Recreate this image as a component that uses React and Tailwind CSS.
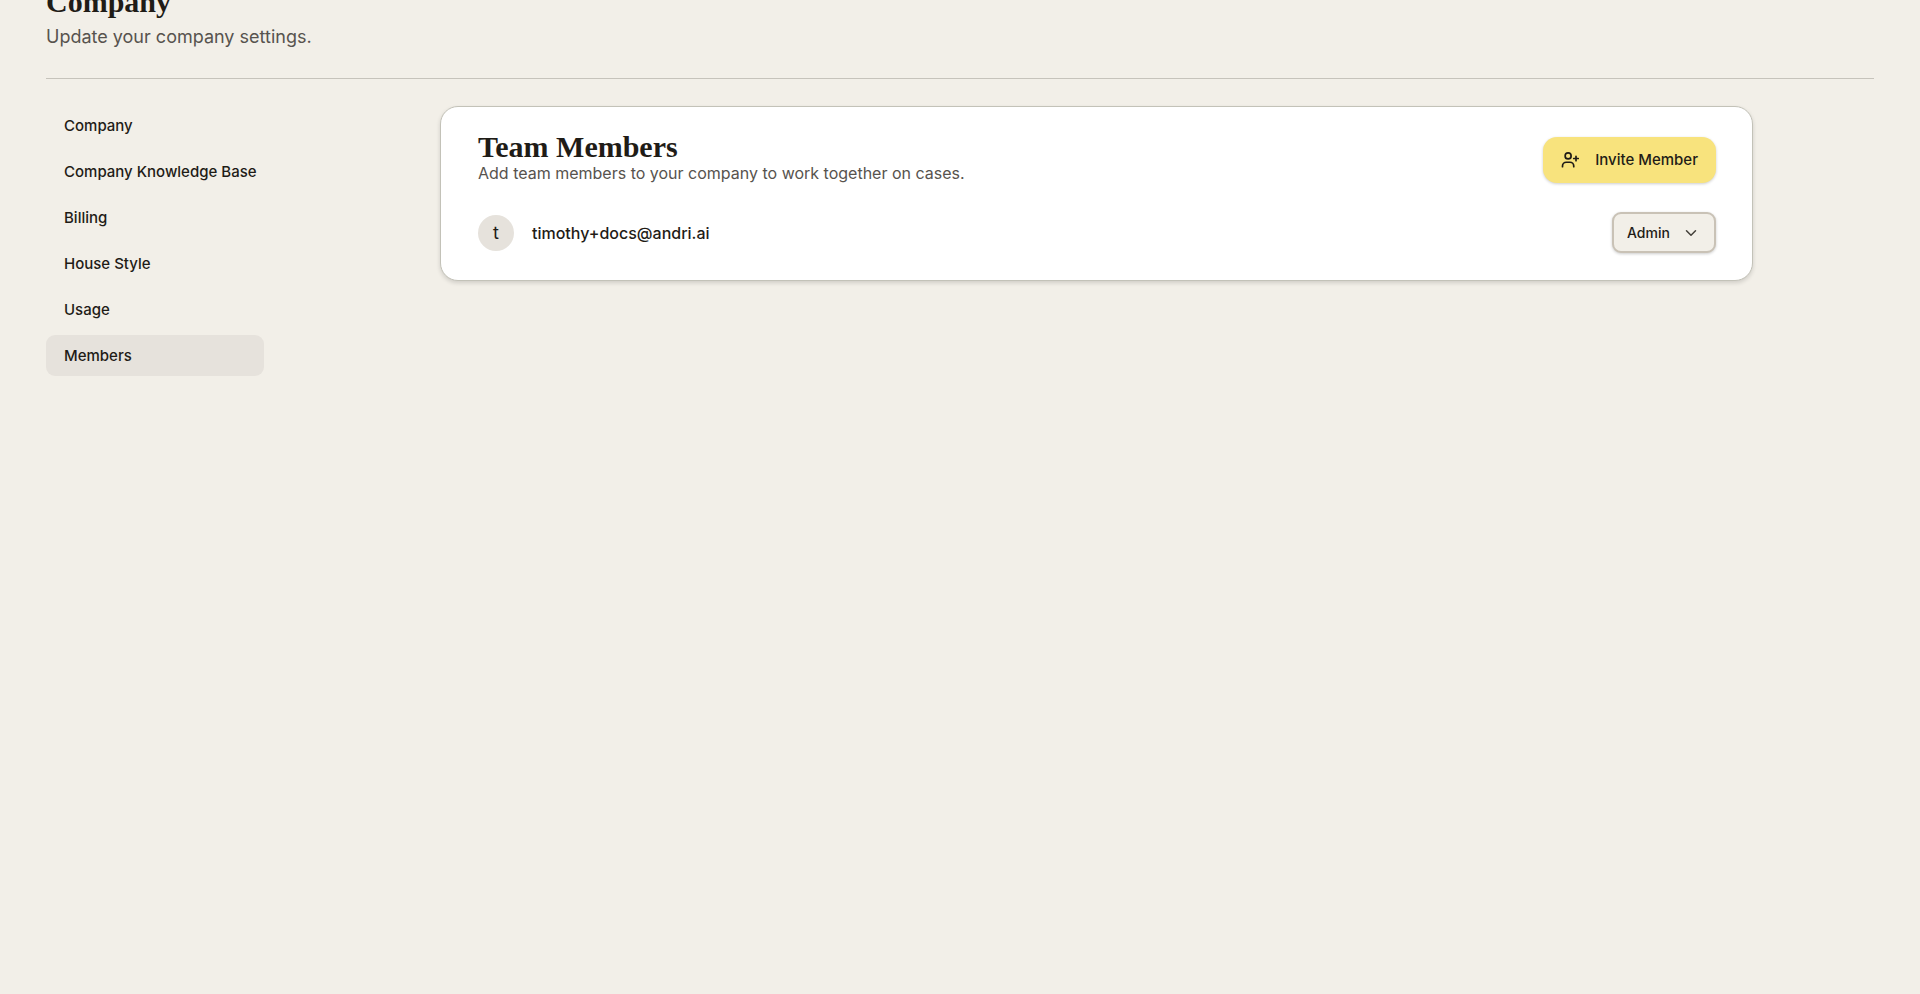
import { ChevronDown } from "lucide-react";

const sections = ["Company", "Company Knowledge Base", "Billing", "House Style", "Usage", "Members"];

function UserPlusIcon() {
  return (
    <svg
      aria-hidden="true"
      viewBox="0 0 24 24"
      fill="none"
      stroke="currentColor"
      strokeWidth="2.25"
      strokeLinecap="round"
      strokeLinejoin="round"
      className="size-[18px]"
    >
      <path d="M2 21v-1a5 5 0 0 1 5-5h5a5 5 0 0 1 5 5v1" />
      <circle cx="9.5" cy="6.5" r="4" />
      <path d="M20 7v6M17 10h6" />
    </svg>
  );
}

export default function App() {
  return (
    <div className="min-h-screen overflow-hidden bg-[#f2efe8] px-[46px] font-['Inter',sans-serif] text-[#1f1c17]">
      <header className="-mt-4 border-b border-[#c6c3bb] pb-[27px]">
        <h1 className="mb-[3px] font-['Liberation_Serif',serif] text-[30px] leading-9 font-bold">Company</h1>
        <p className="text-lg leading-7 text-[#57534e]">Update your company settings.</p>
      </header>

      <div className="flex items-start pt-[26px]">
        <aside className="w-[394px] shrink-0">
          <nav aria-label="Settings">
            <ul className="flex w-[218px] flex-col gap-[5px]">
              {sections.map((name) => (
                <li key={name}>
                  <a
                    href="#"
                    aria-current={name === "Members" ? "page" : undefined}
                    className="flex h-[41px] items-center rounded-[9px] px-[18px] text-[15px] leading-6 font-medium whitespace-nowrap aria-[current=page]:bg-[#e6e2dc]"
                  >
                    {name}
                  </a>
                </li>
              ))}
            </ul>
          </nav>
        </aside>

        <main className="mt-px mr-[121px] min-w-0 flex-1 rounded-[18px] border border-[#c3c2b8] bg-white pt-[30px] pr-9 pb-[27px] pl-[37px] shadow-[0_2px_4px_rgba(0,0,0,0.14)]">
          <div className="flex items-start justify-between">
            <div>
              <h2 className="mb-1 font-['Liberation_Serif',serif] text-[30px] leading-5 font-bold">Team Members</h2>
              <p className="text-base leading-6 text-[#57534e]">
                Add team members to your company to work together on cases.
              </p>
            </div>
            <button
              type="button"
              className="flex h-[46px] items-center gap-4 rounded-[14px] bg-[#f8e37d] px-[18px] text-[15px] leading-6 font-medium shadow-[0_1px_3px_rgba(0,0,0,0.2)]"
            >
              <UserPlusIcon />
              Invite Member
            </button>
          </div>

          <div className="mt-[27px] flex items-center justify-between">
            <div className="flex items-center gap-[18px]">
              <span className="flex size-9 items-center justify-center rounded-full bg-[#e6e2dc] text-lg">t</span>
              <span className="text-base font-medium">timothy+docs@andri.ai</span>
            </div>
            <div className="flex items-center">
              <select
                aria-label="Role"
                className="h-[41px] w-[104px] appearance-none rounded-[9px] border-2 border-[#c9c2b6] bg-[#f2efe8] pl-[13px] text-sm font-medium shadow-[0_1px_3px_rgba(0,0,0,0.2)]"
              >
                <option>Admin</option>
                <option>Member</option>
              </select>
              <ChevronDown aria-hidden="true" className="pointer-events-none mr-4 -ml-[34px] size-[18px] text-[#44403a]" />
            </div>
          </div>
        </main>
      </div>
    </div>
  );
}
